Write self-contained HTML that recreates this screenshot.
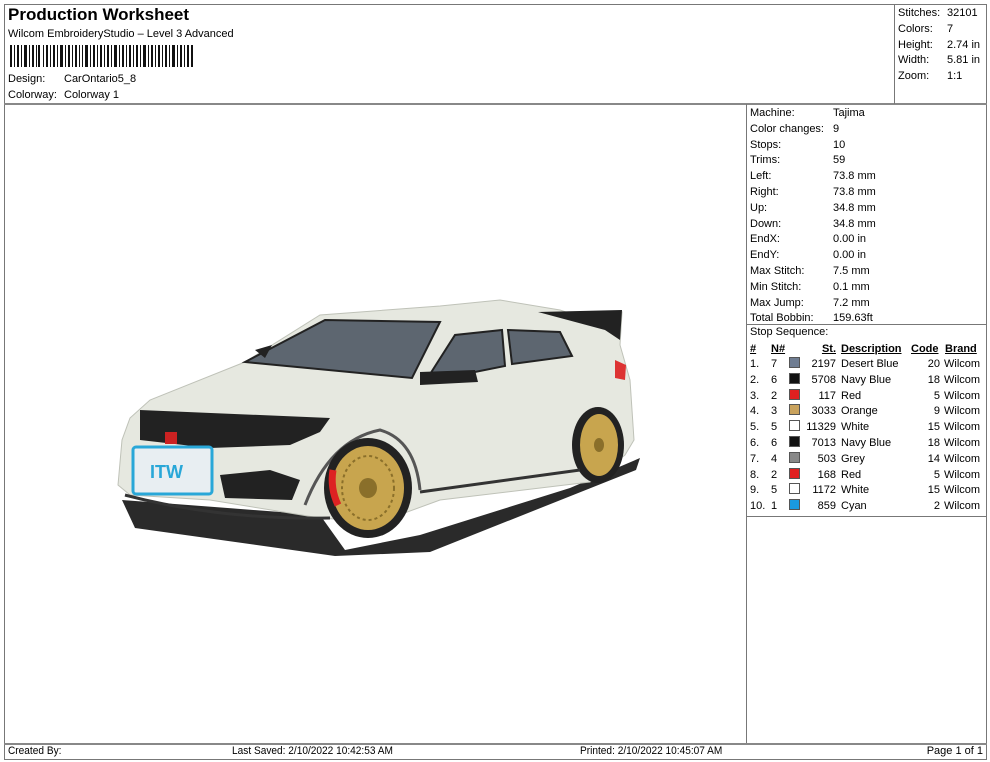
<!DOCTYPE html>
<html><head><meta charset="utf-8"><style>
*{margin:0;padding:0;box-sizing:border-box}
body{width:990px;height:762px;background:#fff;font-family:"Liberation Sans",Arial,sans-serif;color:#000;position:relative;overflow:hidden;font-size:11px}
.a{position:absolute;white-space:nowrap}
.l{position:absolute;background:#777}
u{text-decoration:underline}
.sw{display:inline-block;width:11px;height:11px;border:1px solid #555;vertical-align:-1px}
</style></head><body>
<div class="l" style="left:4px;top:4px;width:983px;height:1px"></div>
<div class="l" style="left:4px;top:4px;width:1px;height:756px"></div>
<div class="l" style="left:986px;top:4px;width:1px;height:756px"></div>
<div class="l" style="left:4px;top:103px;width:983px;height:2px;background:#888"></div>
<div class="l" style="left:894px;top:4px;width:1px;height:100px"></div>
<div class="l" style="left:746px;top:104px;width:1px;height:640px"></div>
<div class="l" style="left:746px;top:324px;width:241px;height:1px"></div>
<div class="l" style="left:746px;top:516px;width:241px;height:1px"></div>
<div class="l" style="left:4px;top:743px;width:983px;height:2px;background:#888"></div>
<div class="l" style="left:4px;top:759px;width:983px;height:1px"></div>

<div class="a" style="left:8px;top:5px;font-size:17px;font-weight:bold">Production Worksheet</div>
<div class="a" style="left:8px;top:28px;font-size:11px">Wilcom EmbroideryStudio – Level 3 Advanced</div>
<svg class="a" style="left:10px;top:45px" width="185" height="22">
<g fill="#111">
<rect x="0" y="0" width="2" height="22"/><rect x="4" width="1" height="22"/><rect x="7" width="2" height="22"/><rect x="11" width="1" height="22"/><rect x="14" width="3" height="22"/><rect x="19" width="1" height="22"/><rect x="22" width="2" height="22"/><rect x="26" width="1" height="22"/><rect x="28" width="2" height="22"/><rect x="33" width="1" height="22"/><rect x="36" width="2" height="22"/><rect x="40" width="1" height="22"/><rect x="43" width="2" height="22"/><rect x="47" width="1" height="22"/><rect x="50" width="3" height="22"/><rect x="55" width="1" height="22"/><rect x="58" width="2" height="22"/><rect x="62" width="1" height="22"/><rect x="65" width="2" height="22"/><rect x="69" width="1" height="22"/><rect x="72" width="1" height="22"/><rect x="75" width="3" height="22"/><rect x="80" width="1" height="22"/><rect x="83" width="2" height="22"/><rect x="87" width="1" height="22"/><rect x="90" width="2" height="22"/><rect x="94" width="1" height="22"/><rect x="97" width="2" height="22"/><rect x="101" width="1" height="22"/><rect x="104" width="3" height="22"/><rect x="109" width="1" height="22"/><rect x="112" width="2" height="22"/><rect x="116" width="1" height="22"/><rect x="119" width="2" height="22"/><rect x="123" width="1" height="22"/><rect x="126" width="2" height="22"/><rect x="130" width="1" height="22"/><rect x="133" width="3" height="22"/><rect x="138" width="1" height="22"/><rect x="141" width="2" height="22"/><rect x="145" width="1" height="22"/><rect x="148" width="2" height="22"/><rect x="152" width="1" height="22"/><rect x="155" width="2" height="22"/><rect x="159" width="1" height="22"/><rect x="162" width="3" height="22"/><rect x="167" width="1" height="22"/><rect x="170" width="2" height="22"/><rect x="174" width="1" height="22"/><rect x="177" width="2" height="22"/><rect x="181" width="2" height="22"/>
</g></svg>
<div class="a" style="left:8px;top:73px">Design:</div><div class="a" style="left:64px;top:73px">CarOntario5_8</div>
<div class="a" style="left:8px;top:89px">Colorway:</div><div class="a" style="left:64px;top:89px">Colorway 1</div>

<div class="a" style="left:898px;top:6px;line-height:15.8px">Stitches:<br>Colors:<br>Height:<br>Width:<br>Zoom:</div>
<div class="a" style="left:947px;top:6px;line-height:15.8px">32101<br>7<br>2.74 in<br>5.81 in<br>1:1</div>

<div class="a" style="left:750px;top:106px;line-height:15.8px">Machine:<br>Color changes:<br>Stops:<br>Trims:<br>Left:<br>Right:<br>Up:<br>Down:<br>EndX:<br>EndY:<br>Max Stitch:<br>Min Stitch:<br>Max Jump:<br>Total Bobbin:</div>
<div class="a" style="left:833px;top:106px;line-height:15.8px">Tajima<br>9<br>10<br>59<br>73.8 mm<br>73.8 mm<br>34.8 mm<br>34.8 mm<br>0.00 in<br>0.00 in<br>7.5 mm<br>0.1 mm<br>7.2 mm<br>159.63ft</div>
<div class="a" style="left:750px;top:326px">Stop Sequence:</div>
<div class="a" style="left:750px;top:342px;line-height:15.8px;font-weight:bold"><u>#</u></div>
<div class="a" style="left:771px;top:342px;line-height:15.8px;font-weight:bold"><u>N#</u></div>
<div class="a" style="left:806px;top:342px;width:30px;text-align:right;line-height:15.8px;font-weight:bold"><u>St.</u></div>
<div class="a" style="left:841px;top:342px;line-height:15.8px;font-weight:bold"><u>Description</u></div>
<div class="a" style="left:911px;top:342px;line-height:15.8px;font-weight:bold"><u>Code</u></div>
<div class="a" style="left:945px;top:342px;line-height:15.8px;font-weight:bold"><u>Brand</u></div>
<div class="a" style="left:750px;top:357px;line-height:15.8px">1.<br>2.<br>3.<br>4.<br>5.<br>6.<br>7.<br>8.<br>9.<br>10.</div>
<div class="a" style="left:771px;top:357px;line-height:15.8px">7<br>6<br>2<br>3<br>5<br>6<br>4<br>2<br>5<br>1</div>
<div class="a" style="left:789px;top:357px;line-height:15.8px">
<span class="sw" style="background:#6f7d92"></span><br><span class="sw" style="background:#111"></span><br><span class="sw" style="background:#e02020"></span><br><span class="sw" style="background:#c9a25c"></span><br><span class="sw" style="background:#fff"></span><br><span class="sw" style="background:#111"></span><br><span class="sw" style="background:#888"></span><br><span class="sw" style="background:#e02020"></span><br><span class="sw" style="background:#fff"></span><br><span class="sw" style="background:#1a9ae0"></span></div>
<div class="a" style="left:796px;top:357px;width:40px;text-align:right;line-height:15.8px">2197<br>5708<br>117<br>3033<br>11329<br>7013<br>503<br>168<br>1172<br>859</div>
<div class="a" style="left:841px;top:357px;line-height:15.8px">Desert Blue<br>Navy Blue<br>Red<br>Orange<br>White<br>Navy Blue<br>Grey<br>Red<br>White<br>Cyan</div>
<div class="a" style="left:910px;top:357px;width:30px;text-align:right;line-height:15.8px">20<br>18<br>5<br>9<br>15<br>18<br>14<br>5<br>15<br>2</div>
<div class="a" style="left:944px;top:357px;line-height:15.8px">Wilcom<br>Wilcom<br>Wilcom<br>Wilcom<br>Wilcom<br>Wilcom<br>Wilcom<br>Wilcom<br>Wilcom<br>Wilcom</div>

<div class="a" style="left:8px;top:745px;font-size:11px;transform:scaleX(.92);transform-origin:left">Created By:</div>
<div class="a" style="left:232px;top:745px;font-size:11px;transform:scaleX(.92);transform-origin:left">Last Saved: 2/10/2022 10:42:53 AM</div>
<div class="a" style="left:580px;top:745px;font-size:11px;transform:scaleX(.92);transform-origin:left">Printed: 2/10/2022 10:45:07 AM</div>
<div class="a" style="right:7px;top:745px;font-size:11px">Page 1 of 1</div>

<svg class="a" style="left:0;top:0" width="746" height="740">
<polygon points="122,500 320,515 345,550 420,535 570,488 640,458 636,470 430,552 335,556 135,528" fill="#2a2a2a"/>
<polygon points="118,485 122,440 130,418 150,400 245,362 320,315 440,306 500,300 560,310 595,322 622,312 620,345 630,380 634,440 625,455 590,482 440,500 380,522 320,518 210,500 130,495" fill="#e6e8e0" stroke="#bfc2b8" stroke-width="1"/>
<polygon points="245,362 325,320 440,322 412,378" fill="#5d6670" stroke="#222" stroke-width="2"/>
<polygon points="425,382 455,335 502,330 505,366" fill="#5d6670" stroke="#222" stroke-width="2"/>
<polygon points="508,330 560,332 572,356 512,364" fill="#5d6670" stroke="#222" stroke-width="2"/>
<polygon points="538,312 622,310 620,340 605,330" fill="#222"/>
<polygon points="140,410 330,418 320,432 290,445 210,448 140,440" fill="#222"/>
<polygon points="255,350 272,345 265,358" fill="#222"/>
<polygon points="420,372 475,370 478,382 420,385" fill="#222"/>
<path d="M305,505 Q330,440 380,430 Q415,440 420,490" fill="none" stroke="#555" stroke-width="3"/>
<ellipse cx="368" cy="488" rx="44" ry="50" fill="#222"/>
<ellipse cx="368" cy="488" rx="36" ry="42" fill="#c8a54e"/>
<ellipse cx="368" cy="488" rx="26" ry="32" fill="none" stroke="#8a6f2a" stroke-width="2" stroke-dasharray="3 3"/>
<ellipse cx="368" cy="488" rx="9" ry="10" fill="#8a6f2a"/>
<path d="M333,470 Q330,488 338,505" stroke="#d22" stroke-width="7" fill="none"/>
<ellipse cx="598" cy="445" rx="26" ry="38" fill="#222"/>
<ellipse cx="599" cy="445" rx="19" ry="31" fill="#c8a54e"/>
<ellipse cx="599" cy="445" rx="5" ry="7" fill="#8a6f2a"/>
<polygon points="615,360 626,365 625,380 615,378" fill="#d33"/>
<rect x="133" y="447" width="79" height="47" rx="3" fill="#e8eef2" stroke="#29a7d8" stroke-width="3"/>
<text x="150" y="478" font-family="Liberation Sans" font-size="18" font-weight="bold" fill="#29a7d8">ITW</text>
<rect x="165" y="432" width="12" height="12" fill="#c22"/>
<polygon points="220,475 270,470 300,480 292,500 225,498" fill="#222"/>
<path d="M125,495 Q220,520 330,518" stroke="#333" stroke-width="3" fill="none"/>
<path d="M420,492 L580,470" stroke="#333" stroke-width="3" fill="none"/>
</svg>
</body></html>
